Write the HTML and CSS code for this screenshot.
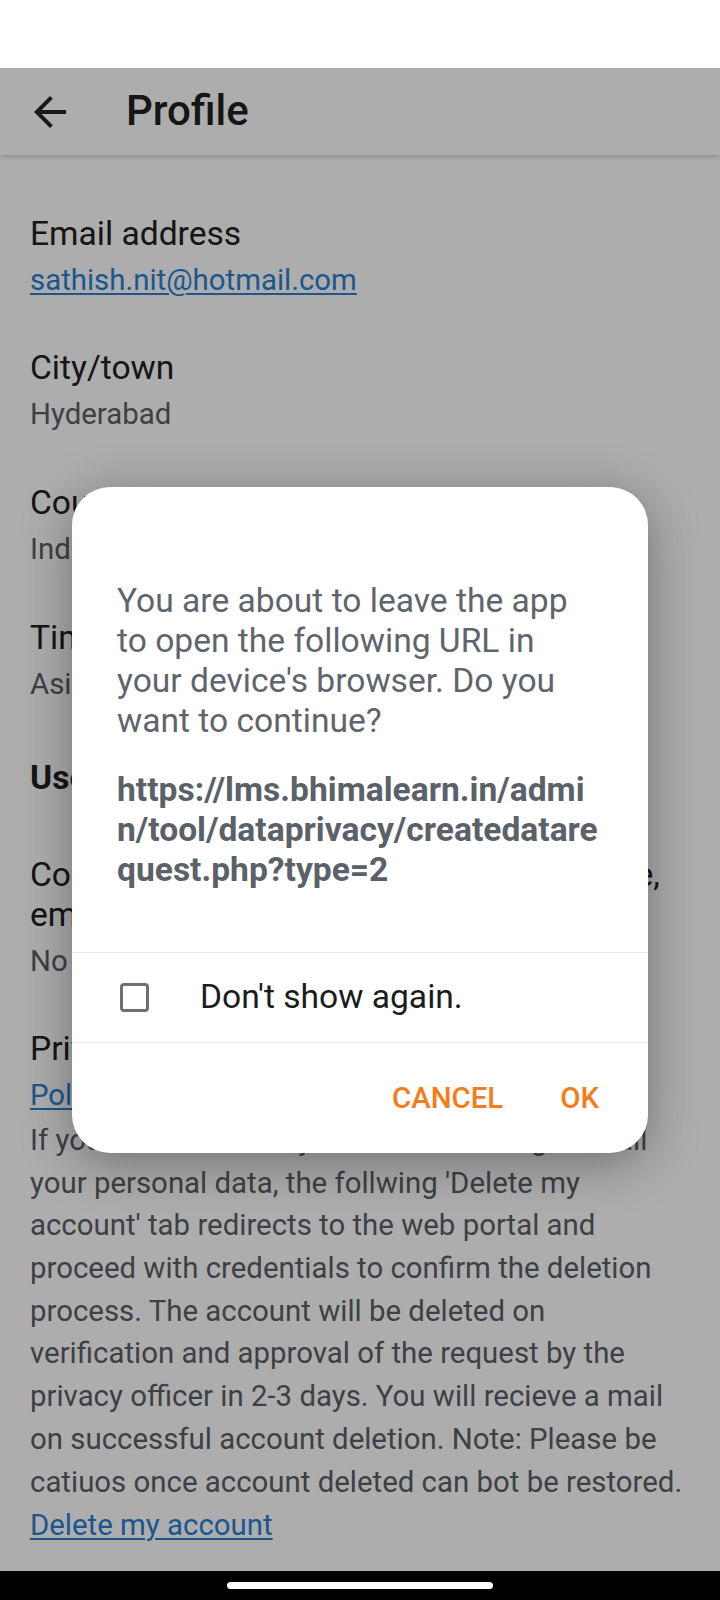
FILE: index.html
```html
<!DOCTYPE html>
<html lang="en">
<head>
    <meta charset="UTF-8">
    <meta name="viewport" content="width=device-width, initial-scale=1.0">
    <title>Profile</title>
    <link rel="stylesheet" href="styles.css">
</head>
<body>
    <div class="phone">
        <div class="status-bar"></div>

        <div class="app">
            <div class="toolbar">
                <button class="back-btn" aria-label="Back">
                    <svg viewBox="0 0 24 24" width="48" height="48">
                        <path d="M20 11H7.83l5.59-5.59L12 4l-8 8 8 8 1.41-1.41L7.83 13H20v-2z" fill="currentColor"/>
                    </svg>
                </button>
                <h1 class="title">Profile</h1>
            </div>

            <div class="content">
                <div class="field">
                    <div class="label">Email address</div>
                    <div class="value"><a href="#">sathish.nit@hotmail.com</a></div>
                </div>
                <div class="field">
                    <div class="label">City/town</div>
                    <div class="value">Hyderabad</div>
                </div>
                <div class="field">
                    <div class="label">Country</div>
                    <div class="value">India</div>
                </div>
                <div class="field">
                    <div class="label">Timezone</div>
                    <div class="value">Asia/Kolkata</div>
                </div>

                <h2 class="section-title">User consent</h2>

                <div class="field">
                    <div class="label">Consent to be contacted over SMS, phone, email and WhatsApp</div>
                    <div class="value">No</div>
                </div>
                <div class="field">
                    <div class="label">Privacy and policies</div>
                    <div class="value">
                        <a href="#">Policies and agreements</a>
                        <p class="note">If you wish to delete your account along with all your personal data, the follwing 'Delete my account' tab redirects to the web portal and proceed with credentials to confirm the deletion process. The account will be deleted on verification and approval of the request by the privacy officer in 2-3 days. You will recieve a mail on successful account deletion. Note: Please be catiuos once account deleted can bot be restored.</p>
                        <a href="#" class="delete-link">Delete my account</a>
                    </div>
                </div>
            </div>

            <!-- dialog shown over the page -->
            <div class="overlay">
                <div class="dialog">
                    <div class="dialog-body">
                        <p class="message">You are about to leave the app to open the following URL in your device's browser. Do you want to continue?</p>
                        <p class="url">https://lms.bhimalearn.in/admin/tool/dataprivacy/createdatarequest.php?type=2</p>
                    </div>
                    <label class="check-row">
                        <span class="checkbox"></span>
                        <span>Don't show again.</span>
                    </label>
                    <div class="actions">
                        <button class="action">CANCEL</button>
                        <button class="action">OK</button>
                    </div>
                </div>
            </div>
        </div>

        <div class="nav-bar">
            <span class="home-pill"></span>
        </div>
    </div>
</body>
</html>
```

FILE: styles.css
```css
* {
    box-sizing: border-box;
}
body {
    margin: 0;
    background-color: #fff;
    font-family: Roboto, "Liberation Sans", Arial, sans-serif;
    color: #212121;
}
.phone {
    width: 720px;
    height: 1600px;
    display: flex;
    flex-direction: column;
    overflow: hidden;
}
.status-bar {
    height: 68px;
    background-color: #fff;
}
.app {
    flex: 1;
    position: relative;
    display: flex;
    flex-direction: column;
    overflow: hidden;
    background-color: #fff;
}

/* top bar */
.toolbar {
    height: 88px;
    display: flex;
    align-items: center;
    padding-left: 26px;
    background-color: #fff;
    box-shadow: 0 2px 5px rgba(0, 0, 0, 0.18);
    position: relative;
    z-index: 1;
}
.back-btn {
    width: 48px;
    height: 48px;
    padding: 0;
    margin-top: 2px;
    border: none;
    background: none;
    color: #262626;
    display: flex;
}
.title {
    margin: 0 0 0 52px;
    font-size: 42px;
    font-weight: 500;
    line-height: 50px;
    color: #212121;
}

/* profile fields */
.content {
    flex: 1;
    padding: 36px 30px 0 30px;
}
.field {
    padding: 23px 0 24px;
}
.label {
    font-size: 33.6px;
    line-height: 40px;
    color: #212121;
}
.value {
    margin-top: 5px;
    font-size: 29.4px;
    line-height: 42.7px;
    color: #5a5f65;
}
.value a {
    color: #2a7fd2;
    text-decoration: underline;
    text-decoration-thickness: 2px;
    text-underline-offset: 3px;
}
.note {
    margin: 2px 0 0;
}
.delete-link {
    display: inline-block;
    margin-top: 1px;
}
.section-title {
    margin: 0;
    padding: 28px 0 34px;
    font-size: 33.6px;
    line-height: 40px;
    font-weight: 700;
    color: #212121;
}

/* scrim + dialog */
.overlay {
    position: absolute;
    inset: 0;
    z-index: 2;
    background-color: rgba(0, 0, 0, 0.32);
    display: flex;
    align-items: center;
    justify-content: center;
}
.dialog {
    width: 576px;
    background-color: #fff;
    border-radius: 38px;
    box-shadow: 0 10px 50px rgba(0, 0, 0, 0.35);
    overflow: hidden;
}
.dialog-body {
    padding: 94px 45px 62px;
    border-bottom: 1px solid #e8e8e8;
}
.message,
.url {
    margin: 0;
    font-size: 33.6px;
    line-height: 40px;
    color: #5f656d;
}
.url {
    margin-top: 29px;
    font-weight: 700;
    color: #5a6169;
    word-break: break-all;
}
.check-row {
    height: 90px;
    display: flex;
    align-items: center;
    padding-left: 48px;
    border-bottom: 1px solid #e8e8e8;
    font-size: 33.6px;
    line-height: 40px;
    color: #1c1c1c;
}
.checkbox {
    width: 29px;
    height: 29px;
    border: 3px solid #6c7177;
    border-radius: 4px;
    margin-right: 51px;
}
.actions {
    display: flex;
    justify-content: flex-end;
    gap: 57px;
    padding: 35px 49px 35px 0;
}
.action {
    padding: 0;
    border: none;
    background: none;
    font-family: Roboto, "Liberation Sans", Arial, sans-serif;
    font-size: 29.4px;
    font-weight: 500;
    line-height: 40px;
    color: #f47d1a;
}

/* system navigation */
.nav-bar {
    height: 29px;
    background-color: #000;
    display: flex;
    justify-content: center;
    padding-top: 11px;
}
.home-pill {
    width: 266px;
    height: 7px;
    border-radius: 4px;
    background-color: #fff;
}
```
